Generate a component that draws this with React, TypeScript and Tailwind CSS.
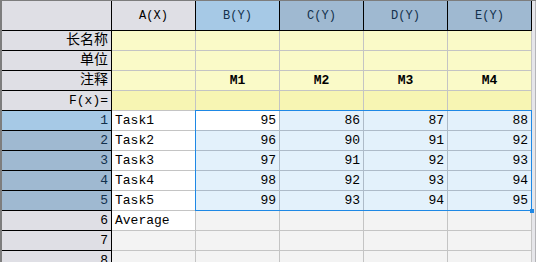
import React from "react";

const COLS = ["A(X)", "B(Y)", "C(Y)", "D(Y)", "E(Y)"];

const META = [
  { label: "长名称", cells: ["", "", "", "", ""], bg: "bg-[#fafac8]" },
  { label: "单位", cells: ["", "", "", "", ""], bg: "bg-[#fafac8]" },
  { label: "注释", cells: ["", "M1", "M2", "M3", "M4"], bg: "bg-[#fafac8]" },
  { label: "F(x)=", cells: ["", "", "", "", ""], bg: "bg-[#f7f5b3]" },
];

const DATA: (string | number)[][] = [
  ["Task1", 95, 86, 87, 88],
  ["Task2", 96, 90, 91, 92],
  ["Task3", 97, 91, 92, 93],
  ["Task4", 98, 92, 93, 94],
  ["Task5", 99, 93, 94, 95],
  ["Average"],
  [],
  [],
];

const mono = "font-['Liberation_Mono','Noto_Sans_CJK_SC',monospace]";

export default function App() {
  return (
    <div className="flex h-[262px] w-[536px] overflow-hidden border-t border-[#7d7d7d] bg-[#e6e6ea] text-black">
      <div className="relative flex w-[532px] shrink-0 flex-col border-l-2 border-[#7d7d7d]">
        {/* column headers */}
        <div className="flex h-[30px] shrink-0 border-b border-black">
          <div className="w-[110px] shrink-0 border-r border-black bg-[#dfdfe5]" />
          {COLS.map((c, i) => (
            <div
              key={c}
              className={`flex w-[84px] shrink-0 items-center justify-center border-r border-black text-[12px] ${mono} ${
                i === 0
                  ? "bg-[#dfdfe5] text-black"
                  : i === 1
                    ? "bg-[#a6c9e6] text-[#12304c]"
                    : "bg-[#9fb9d1] text-[#12304c]"
              }`}
            >
              {c}
            </div>
          ))}
        </div>

        {/* label rows */}
        {META.map((r) => (
          <div key={r.label} className="flex h-[20px] shrink-0">
            <div
              className={`flex w-[110px] shrink-0 items-center justify-end border-r border-b border-black bg-[#dfdfe5] pr-[3px] ${
                r.label === "F(x)=" ? "text-[13px]" : "text-[14px]"
              } ${mono}`}
            >
              {r.label}
            </div>
            {r.cells.map((v, i) => (
              <div
                key={i}
                className={`flex w-[84px] shrink-0 items-center justify-center border-r border-b border-[#c4c4c4] text-[13px] font-semibold ${mono} ${r.bg}`}
              >
                {v}
              </div>
            ))}
          </div>
        ))}

        {/* data rows */}
        {DATA.map((row, ri) => {
          const sel = ri < 5;
          return (
            <div key={ri} className="flex h-[20px] shrink-0">
              <div
                className={`flex w-[110px] shrink-0 items-center justify-end border-r border-b border-black pr-[3px] text-[13px] ${mono} ${
                  ri === 0
                    ? "bg-[#a6c9e6] text-[#12304c]"
                    : sel
                      ? "bg-[#9fb9d1] text-[#12304c]"
                      : "bg-[#dfdfe5]"
                }`}
              >
                {ri + 1}
              </div>
              <div
                className={`flex w-[84px] shrink-0 items-center border-r border-b border-[#c4c4c4] pl-[3px] text-[13px] ${mono} ${
                  ri < 6 ? "bg-white" : "bg-[#f3f3f3]"
                }`}
              >
                {row[0] ?? ""}
              </div>
              {[1, 2, 3, 4].map((ci) => (
                <div
                  key={ci}
                  className={`flex w-[84px] shrink-0 items-center justify-end border-r border-b pr-[3px] text-[13px] ${mono} ${
                    sel
                      ? ri === 0 && ci === 1
                        ? "border-[#aebbc8] bg-white"
                        : "border-[#aebbc8] bg-[#e3f1fb]"
                      : "border-[#c4c4c4] bg-[#f3f3f3]"
                  }`}
                >
                  {row[ci] ?? ""}
                </div>
              ))}
            </div>
          );
        })}

        {/* selection outline */}
        <div className="pointer-events-none absolute left-[193px] top-[109px] h-[101px] w-[337px] border border-[#1e88e5]" />
        <div className="pointer-events-none absolute left-[528px] top-[208px] h-[4px] w-[4px] bg-[#1e88e5]" />
      </div>
      <div className="h-full w-[4px] shrink-0 border-r border-[#b4b4b8] bg-[#e6e6ea]" />
    </div>
  );
}
